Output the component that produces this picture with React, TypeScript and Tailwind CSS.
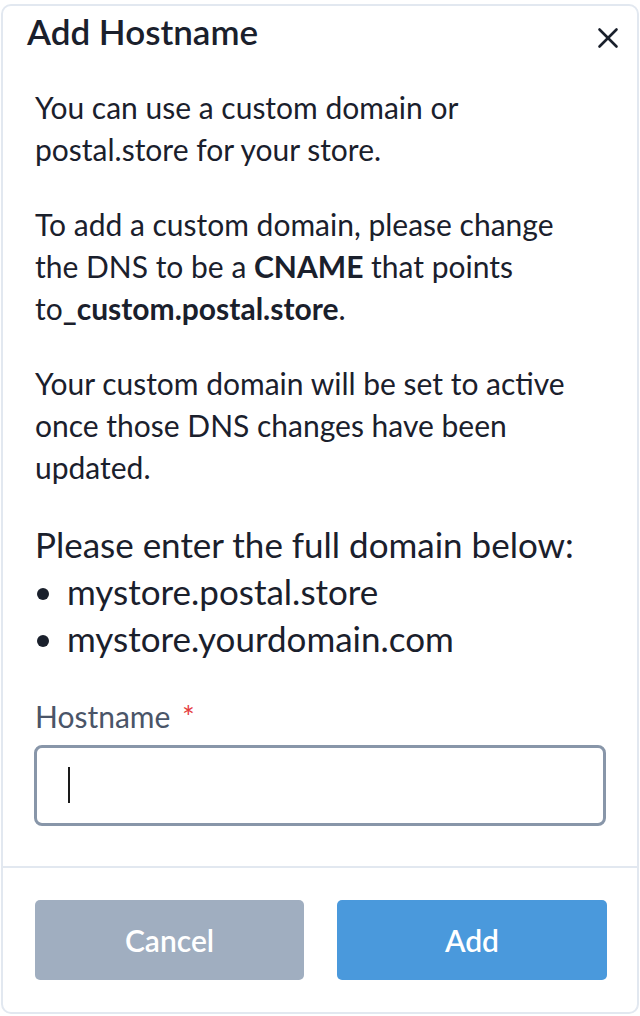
import { useState } from "react";

const font = { fontFamily: "Lato, 'Noto Sans', sans-serif" };

const CloseIcon = () => (
  <svg width="22" height="22" viewBox="0 0 22 22" fill="none" stroke="#1a202c" strokeWidth="2.6" strokeLinecap="round">
    <line x1="2.5" y1="2.5" x2="19.5" y2="19.5" />
    <line x1="19.5" y1="2.5" x2="2.5" y2="19.5" />
  </svg>
);

const App = () => {
  const [host, setHost] = useState("");

  return (
    <div className="w-[640px] h-[1016px] bg-white overflow-hidden" style={font}>
      <div className="ml-[1px] mt-[4px] w-[638px] h-[1010px] border-2 border-[#e2e8f0] rounded-[10px] bg-white flex flex-col">
        <div className="h-[50px] pl-[24px] pr-[18px] flex items-center justify-between">
          <h2 className="text-[35px] leading-[48px] font-semibold text-[#1a202c]">Add Hostname</h2>
          <button className="mt-[14px]">
            <CloseIcon />
          </button>
        </div>

        <div className="pt-[30px] pl-[32px] pr-[29px] text-[30px] leading-[42px] text-[#1a202c]">
          <p className="mb-[33px]">
            You can use a custom domain or
            <br />
            postal.store for your store.
          </p>
          <p className="mb-[33px]">
            To add a custom domain, please change
            <br />
            the DNS to be a <b>CNAME</b> that points
            <br />
            to<b>_custom.postal.store</b>.
          </p>
          <p className="mb-[33px]">
            Your custom domain will be set to active
            <br />
            once those DNS changes have been
            <br />
            updated.
          </p>

          <div className="text-[35px] leading-[47px] mb-[33px]">
            <p>Please enter the full domain below:</p>
            <ul className="list-disc pl-[32px]">
              <li>mystore.postal.store</li>
              <li>mystore.yourdomain.com</li>
            </ul>
          </div>

          <label className="block text-[#4a5568] mb-[8px]">
            Hostname <span className="text-[#e53e3e] ml-[4px]">*</span>
          </label>
          <div className="relative w-[572px] -ml-[1px]">
            <input
              value={host}
              onChange={(e) => setHost(e.target.value)}
              className="w-full h-[81px] border-[3px] border-[#8896a9] rounded-[8px] px-[32px] text-[30px] text-[#1a202c] outline-none"
            />
            {host === "" && (
              <span className="absolute left-[34px] top-[22px] w-[2px] h-[36px] bg-[#1a1a1a] pointer-events-none" />
            )}
          </div>
        </div>

        <div className="mt-[40px] border-t-2 border-[#e2e8f0] flex gap-[33px] pl-[32px] pt-[32px]">
          <button className="w-[269px] h-[80px] rounded-[5px] bg-[#a0aec0] text-white text-[30px] font-semibold">
            Cancel
          </button>
          <button className="w-[270px] h-[80px] rounded-[5px] bg-[#4a99dc] text-white text-[30px] font-semibold">
            Add
          </button>
        </div>
      </div>
    </div>
  );
};

export default App;
